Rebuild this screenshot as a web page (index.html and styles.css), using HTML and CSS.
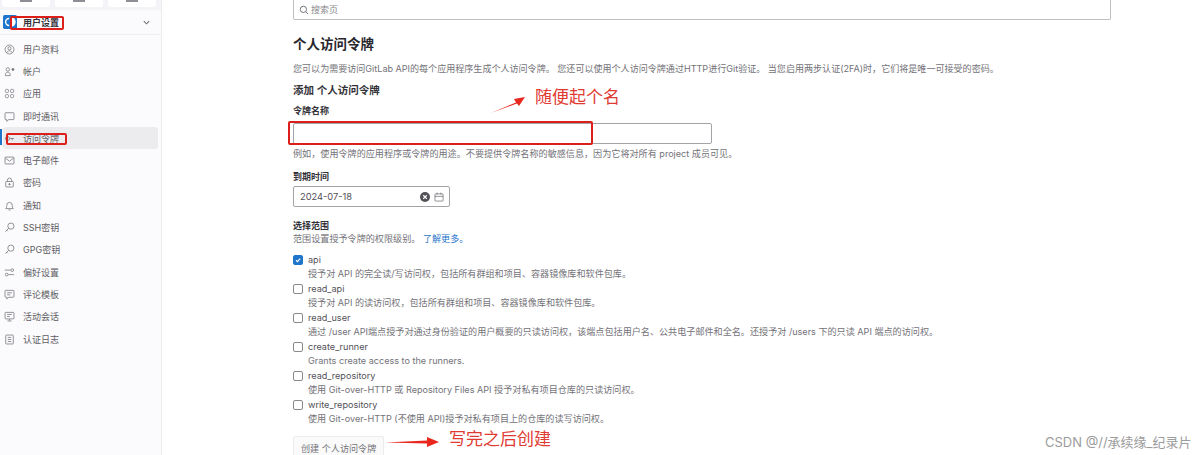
FILE: index.html
```html
<!DOCTYPE html>
<html lang="zh-CN">
<head>
    <meta charset="UTF-8">
    <title>个人访问令牌</title>
    <link rel="stylesheet" href="styles.css">
</head>
<body>
    <div class="page">
        <div class="sidebar">
            <div class="top-btns">
                <div class="top-btn"></div>
                <div class="top-btn"></div>
                <div class="top-btn"></div>
            </div>
            <div class="context">
                <svg class="context-logo" viewBox="0 0 16 16"><rect width="16" height="16" rx="2" fill="#1f75cb"/><path d="M9 2.5a5.5 5.5 0 0 1 0 11z" fill="#fff"/><path d="M7 4a4 4 0 0 0 0 8" fill="none" stroke="#fff" stroke-width="1.6"/></svg>
                <span>用户设置</span>
                <svg class="chevron" viewBox="0 0 10 10"><path d="M2 3.5l3 3 3-3" fill="none" stroke="#737278" stroke-width="1.2"/></svg>
            </div>
            <div class="nav">
                <a class="nav-item"><svg viewBox="0 0 16 16"><circle cx="8" cy="8" r="6.5"/><circle cx="8" cy="6.2" r="2.3"/><path d="M3.8 12.8c1-2 2.5-2.8 4.200-2.800s3.200.8 4.200 2.800"/></svg>用户资料</a>
                <a class="nav-item"><svg viewBox="0 0 16 16"><circle cx="5.5" cy="5" r="2.5"/><path d="M2 14v-1.500c0-2 1.500-3.500 3.500-3.500s3.500 1.500 3.500 3.500V14z"/><circle cx="13" cy="5" r="1.5" fill="#737278"/></svg>帐户</a>
                <a class="nav-item"><svg viewBox="0 0 16 16"><rect x="2" y="2" width="4.5" height="4.5" rx="1.5"/><rect x="9.5" y="2" width="4.5" height="4.5" rx="1.5"/><rect x="2" y="9.5" width="4.5" height="4.5" rx="1.5"/><rect x="9.5" y="9.5" width="4.5" height="4.5" rx="1.5"/></svg>应用</a>
                <a class="nav-item"><svg viewBox="0 0 16 16"><path d="M2.500 2.500h11a1 1 0 0 1 1 1v8a1 1 0 0 1-1 1H7l-3 2.500v-2.500H2.500a1 1 0 0 1-1-1v-8a1 1 0 0 1 1-1z"/></svg>即时通讯</a>
                <a class="nav-item active"><svg viewBox="0 0 16 16"><circle cx="5" cy="8" r="3"/><path d="M8 8h6.500M12 8v2.500"/></svg>访问令牌</a>
                <a class="nav-item"><svg viewBox="0 0 16 16"><rect x="1.5" y="3" width="13" height="10" rx="1"/><path d="M2 4.500l6 4.500 6-4.500"/></svg>电子邮件</a>
                <a class="nav-item"><svg viewBox="0 0 16 16"><rect x="2.5" y="6.5" width="11" height="8" rx="1"/><path d="M5 6.500V4.500a3 3 0 0 1 6 0v2"/><circle cx="8" cy="10.5" r="1" fill="#737278"/></svg>密码</a>
                <a class="nav-item"><svg viewBox="0 0 16 16"><path d="M2.500 12.500c1.200-1 1.500-2.500 1.500-5a4 4 0 0 1 8 0c0 2.500.3 4 1.500 5z"/><path d="M6.500 14.500h3"/></svg>通知</a>
                <a class="nav-item"><svg viewBox="0 0 16 16"><circle cx="10" cy="6" r="4.5"/><path d="M6.800 9.200L2 14M4 12l1.500 1.500"/></svg>SSH密钥</a>
                <a class="nav-item"><svg viewBox="0 0 16 16"><circle cx="10" cy="6" r="4.5"/><path d="M6.800 9.200L2 14M4 12l1.500 1.500"/></svg>GPG密钥</a>
                <a class="nav-item"><svg viewBox="0 0 16 16"><circle cx="12" cy="4.5" r="2"/><circle cx="4" cy="11" r="2"/><path d="M1 4.500h8.500M14.500 11H6.500"/></svg>偏好设置</a>
                <a class="nav-item"><svg viewBox="0 0 16 16"><path d="M2.500 2h11a1 1 0 0 1 1 1v8a1 1 0 0 1-1 1H7l-3 2.500V12H2.500a1 1 0 0 1-1-1V3a1 1 0 0 1 1-1z"/><path d="M4.500 5.500h7M4.500 8.500h4.500"/></svg>评论模板</a>
                <a class="nav-item"><svg viewBox="0 0 16 16"><rect x="1.5" y="2" width="13" height="9.5" rx="1"/><path d="M4.500 5h7M4.500 8h4M8 11.500v2.500M5 14.500h6"/></svg>活动会话</a>
                <a class="nav-item"><svg viewBox="0 0 16 16"><rect x="2.5" y="1.5" width="11" height="13" rx="1"/><path d="M5.500 5h5M5.500 8h5M5.500 11h5"/></svg>认证日志</a>
            </div>
        </div>

        <div class="main">
            <div class="search">
                <svg viewBox="0 0 16 16"><circle cx="7" cy="7" r="5"/><path d="M11 11l3.500 3.500"/></svg>
                <span>搜索页</span>
            </div>
            <h1>个人访问令牌</h1>
            <p class="lead">您可以为需要访问GitLab API的每个应用程序生成个人访问令牌。 您还可以使用个人访问令牌通过HTTP进行Git验证。 当您启用两步认证(2FA)时，它们将是唯一可接受的密码。</p>
            <h2>添加 个人访问令牌</h2>
            <div class="label">令牌名称</div>
            <div class="input name-input"></div>
            <p class="help">例如，使用令牌的应用程序或令牌的用途。不要提供令牌名称的敏感信息，因为它将对所有 project 成员可见。</p>
            <div class="label date-label">到期时间</div>
            <div class="input date-input">
                <span>2024-07-18</span>
                <svg class="clear" viewBox="0 0 16 16"><circle cx="8" cy="8" r="8" fill="#535158"/><path d="M5.200 5.200l5.600 5.600M10.800 5.200l-5.600 5.600" stroke="#fff" stroke-width="1.8"/></svg>
                <svg class="calendar" viewBox="0 0 16 16"><rect x="1.5" y="3" width="13" height="11.5" rx="1"/><path d="M1.500 7h13M5 1v3M11 1v3"/></svg>
            </div>
            <div class="label scope-label">选择范围</div>
            <p class="help scope-help">范围设置授予令牌的权限级别。 <a class="link">了解更多。</a></p>
            <div class="scopes">
                <div class="scope">
                    <div class="check checked"><svg viewBox="0 0 10 10"><path d="M2.500 5.200l1.800 1.800 3.400-3.800" fill="none" stroke="#fff" stroke-width="1.5"/></svg></div>
                    <div><div class="scope-name">api</div><div class="scope-desc">授予对 API 的完全读/写访问权，包括所有群组和项目、容器镜像库和软件包库。</div></div>
                </div>
                <div class="scope">
                    <div class="check"></div>
                    <div><div class="scope-name">read_api</div><div class="scope-desc">授予对 API 的读访问权，包括所有群组和项目、容器镜像库和软件包库。</div></div>
                </div>
                <div class="scope">
                    <div class="check"></div>
                    <div><div class="scope-name">read_user</div><div class="scope-desc">通过 /user API端点授予对通过身份验证的用户概要的只读访问权，该端点包括用户名、公共电子邮件和全名。还授予对 /users 下的只读 API 端点的访问权。</div></div>
                </div>
                <div class="scope">
                    <div class="check"></div>
                    <div><div class="scope-name">create_runner</div><div class="scope-desc">Grants create access to the runners.</div></div>
                </div>
                <div class="scope">
                    <div class="check"></div>
                    <div><div class="scope-name">read_repository</div><div class="scope-desc">使用 Git-over-HTTP 或 Repository Files API 授予对私有项目仓库的只读访问权。</div></div>
                </div>
                <div class="scope">
                    <div class="check"></div>
                    <div><div class="scope-name">write_repository</div><div class="scope-desc">使用 Git-over-HTTP (不使用 API)授予对私有项目上的仓库的读写访问权。</div></div>
                </div>
            </div>
            <div class="create-btn">创建 个人访问令牌</div>
        </div>

        <!-- 截图上的红色标注 -->
        <div class="mark mark-context"></div>
        <div class="mark mark-nav"></div>
        <div class="mark mark-input"></div>
        <svg class="arrow arrow-name" viewBox="0 0 34 18"><path d="M0 17L25 6.500 23 3 34 1 28 10 26 7.500z" fill="#e8281e"/></svg>
        <div class="note note-name">随便起个名</div>
        <svg class="arrow arrow-create" viewBox="0 0 54 10"><path d="M0 5.500L42 3.500V0L54 5 42 10V6.500z" fill="#e8281e"/></svg>
        <div class="note note-create">写完之后创建</div>
        <div class="watermark">CSDN @//承续缘_纪录片</div>
    </div>
</body>
</html>
```

FILE: styles.css
```css
html, body {
    margin: 0;
    height: 100%;
    overflow: hidden;
}
body {
    font-family: Inter, "Noto Sans CJK SC", sans-serif;
    color: #333238;
    background-color: #fff;
}
p, h1, h2 {
    margin: 0;
}
.page {
    position: relative;
    display: flex;
    height: 455px;
    overflow: hidden;
}

/* 左侧菜单 */
.sidebar {
    width: 161px;
    flex-shrink: 0;
    background-color: #fbfafd;
    border-right: 1px solid #ececef;
}
.top-btns {
    display: flex;
    gap: 5px;
    padding: 0 2px;
    height: 10px;
    background-color: #f4f3f7;
}
.top-btn {
    position: relative;
    width: 48px;
    height: 7px;
    background-color: #fff;
    border-radius: 0 0 3px 3px;
}
.top-btn::after {
    content: "";
    position: absolute;
    left: 18px;
    top: 0;
    width: 12px;
    height: 2px;
    background-color: #8f8e94;
}
.context {
    display: flex;
    align-items: center;
    height: 24px;
    padding: 0 6px 0 3px;
    font-size: 9px;
    font-weight: 600;
    border-bottom: 1px solid #f0eff3;
}
.context-logo {
    width: 14px;
    height: 14px;
    margin-right: 6px;
}
.context span {
    flex: 1;
}
.chevron {
    width: 9px;
    height: 9px;
    margin-right: 4px;
}
.nav {
    padding-top: 3px;
}
.nav-item {
    position: relative;
    display: flex;
    align-items: center;
    height: 22.3px;
    margin: 0 3px 0 3px;
    padding-left: 1px;
    font-size: 9px;
    color: #5e5d63;
    border-radius: 3px;
}
.nav-item svg {
    width: 11px;
    height: 11px;
    margin-right: 8px;
    fill: none;
    stroke: #737278;
    stroke-width: 1.1;
}
.nav-item.active {
    background-color: #ececef;
}
.nav-item.active::before {
    content: "";
    position: absolute;
    left: -3px;
    top: 2px;
    width: 2px;
    height: 16px;
    background-color: #1f75cb;
}

/* 右侧内容 */
.main {
    flex: 1;
    padding-left: 131px;
}
.search {
    display: flex;
    align-items: center;
    box-sizing: border-box;
    width: 818px;
    height: 20px;
    padding-left: 5px;
    font-size: 9px;
    color: #89888d;
    border: 1px solid #bfbfc3;
    border-top: none;
    border-radius: 0 0 2px 2px;
}
.search svg {
    width: 10px;
    height: 10px;
    margin-right: 2px;
    fill: none;
    stroke: #626168;
    stroke-width: 1.4;
}
h1 {
    margin-top: 14px;
    font-size: 13.5px;
    line-height: 20px;
    font-weight: 600;
    color: #28272d;
}
.lead {
    margin-top: 8px;
    font-size: 9.05px;
    line-height: 13px;
    color: #737278;
    white-space: nowrap;
}
h2 {
    margin-top: 9px;
    font-size: 10.5px;
    line-height: 14px;
    font-weight: 600;
}
.label {
    margin-top: 6px;
    font-size: 9px;
    line-height: 13px;
    font-weight: 600;
}
.input {
    box-sizing: border-box;
    border: 1px solid #a4a3a8;
    border-radius: 2px;
    background-color: #fff;
}
.name-input {
    width: 419px;
    height: 21px;
    margin-top: 6px;
}
.help {
    margin-top: 3px;
    font-size: 9.1px;
    line-height: 13px;
    color: #737278;
    white-space: nowrap;
}
.date-label {
    margin-top: 10px;
}
.date-input {
    display: flex;
    align-items: center;
    width: 157px;
    height: 21px;
    margin-top: 3px;
    padding: 0 5px 0 6px;
    font-size: 9.3px;
    color: #535158;
}
.date-input span {
    flex: 1;
}
.clear {
    width: 10px;
    height: 10px;
    margin-right: 4px;
}
.calendar {
    width: 10px;
    height: 10px;
    fill: none;
    stroke: #535158;
}
.scope-label {
    margin-top: 12px;
}
.scope-help {
    margin-top: 0;
}
.link {
    color: #1f75cb;
}
.scopes {
    margin-top: 8px;
}
.scope {
    display: flex;
    gap: 5px;
    height: 29px;
}
.check {
    width: 10px;
    height: 10px;
    margin-top: 2px;
    box-sizing: border-box;
    border: 1px solid #89888d;
    border-radius: 2px;
    background-color: #fff;
}
.check svg {
    display: block;
    width: 8px;
    height: 8px;
}
.check.checked {
    background-color: #1f75cb;
    border-color: #1f75cb;
}
.scope-name {
    font-size: 9.1px;
    line-height: 14px;
    color: #535158;
}
.scope-desc {
    font-size: 9.1px;
    line-height: 13px;
    color: #737278;
    white-space: nowrap;
}
.create-btn {
    display: inline-flex;
    align-items: center;
    height: 22px;
    margin-top: 9px;
    padding: 0 7px;
    font-size: 9.1px;
    color: #737278;
    background-color: #fafafa;
    border: 1px solid #ececef;
    border-radius: 2px;
}

/* 标注 */
.mark {
    position: absolute;
    box-sizing: border-box;
    border: 2.5px solid #dc1f1a;
    border-radius: 2px;
}
.mark-context {
    left: 10px;
    top: 16px;
    width: 54px;
    height: 14px;
}
.mark-nav {
    left: 6px;
    top: 133px;
    width: 61px;
    height: 12px;
}
.mark-input {
    left: 288px;
    top: 121px;
    width: 305px;
    height: 24px;
}
.arrow {
    position: absolute;
}
.arrow-name {
    left: 491px;
    top: 96px;
    width: 34px;
    height: 18px;
}
.arrow-create {
    left: 385px;
    top: 437px;
    width: 54px;
    height: 10px;
}
.note {
    position: absolute;
    font-size: 17px;
    line-height: 20px;
    color: #e03a32;
    white-space: nowrap;
}
.note-name {
    left: 535px;
    top: 87px;
}
.note-create {
    left: 449px;
    top: 429px;
}
.watermark {
    position: absolute;
    left: 1045px;
    top: 435px;
    font-size: 13px;
    line-height: 14px;
    color: #9c9c9c;
    white-space: nowrap;
}
```
